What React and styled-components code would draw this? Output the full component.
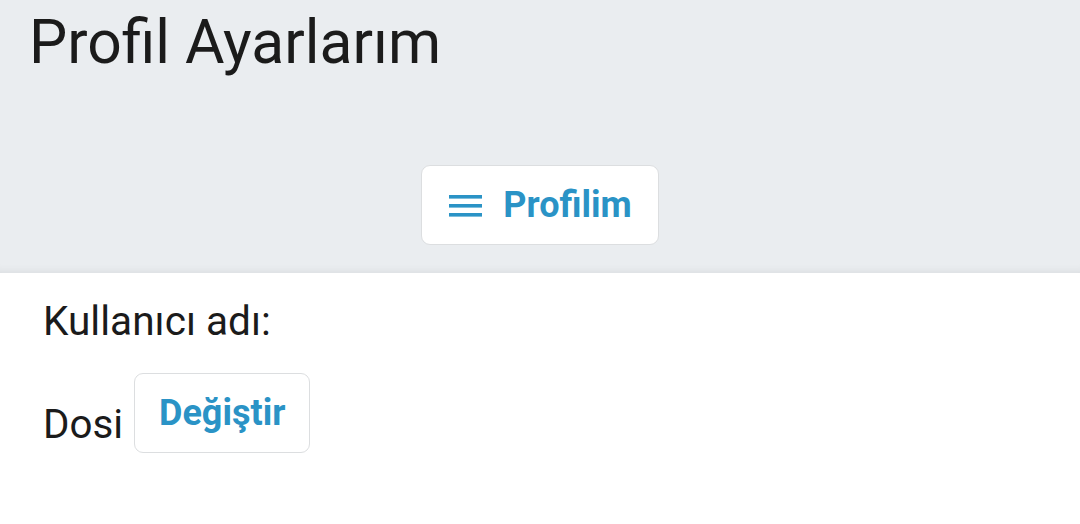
import React from "react";
import styled, { createGlobalStyle } from "styled-components";

const GlobalStyle = createGlobalStyle`
  body {
    margin: 0;
    background: #ffffff;
    font-family: Roboto, "Liberation Sans", sans-serif;
    color: #1b1b1b;
  }
`;

const App = () => {
  return (
    <>
      <GlobalStyle />
      <Header>
        <Title>Profil Ayarlarım</Title>
        <MenuRow>
          <MenuButton>
            <MenuIcon width="33" height="22" viewBox="0 0 33 22">
              <rect x="0" y="0" width="33" height="3.6" fill="currentColor" />
              <rect x="0" y="9" width="33" height="3.6" fill="currentColor" />
              <rect x="0" y="18" width="33" height="3.6" fill="currentColor" />
            </MenuIcon>
            Profilim
          </MenuButton>
        </MenuRow>
      </Header>
      <Content>
        <Label>Kullanıcı adı:</Label>
        <ValueRow>
          <Value>Dosi</Value>
          <ChangeButton>Değiştir</ChangeButton>
        </ValueRow>
      </Content>
    </>
  );
};

export default App;

const Header = styled.div`
  background-color: #eaedf0;
  padding: 8px 29px 28px;
  box-shadow: inset 0 -9px 8px -8px rgba(0, 0, 0, 0.08);
`;

const Title = styled.h1`
  margin: 0;
  font-size: 60.6px;
  font-weight: 400;
  line-height: 70px;
  color: #1b1b1b;
`;

const MenuRow = styled.div`
  display: flex;
  justify-content: center;
  margin-top: 87px;
`;

const MenuButton = styled.button`
  display: flex;
  align-items: center;
  gap: 21px;
  box-sizing: border-box;
  height: 80px;
  padding: 0 26px 0 27px;
  background: #ffffff;
  border: 1.5px solid #dcdee0;
  border-radius: 9px;
  font-family: Roboto, "Liberation Sans", sans-serif;
  font-size: 36px;
  font-weight: 700;
  color: #2a93c6;
`;

const MenuIcon = styled.svg`
  display: block;
  margin-top: 2px;
`;

const Content = styled.div`
  padding: 25px 43px;
`;

const Label = styled.div`
  font-size: 40.6px;
  line-height: 47px;
`;

const ValueRow = styled.div`
  display: flex;
  align-items: flex-start;
  gap: 11px;
  margin-top: 28px;
`;

const Value = styled.span`
  font-size: 40.3px;
  line-height: 47px;
  padding-top: 28px;
`;

const ChangeButton = styled.button`
  box-sizing: border-box;
  height: 80px;
  padding: 0 24px;
  background: #ffffff;
  border: 1.5px solid #dcdee0;
  border-radius: 9px;
  font-family: Roboto, "Liberation Sans", sans-serif;
  font-size: 36px;
  font-weight: 700;
  color: #2a93c6;
`;
